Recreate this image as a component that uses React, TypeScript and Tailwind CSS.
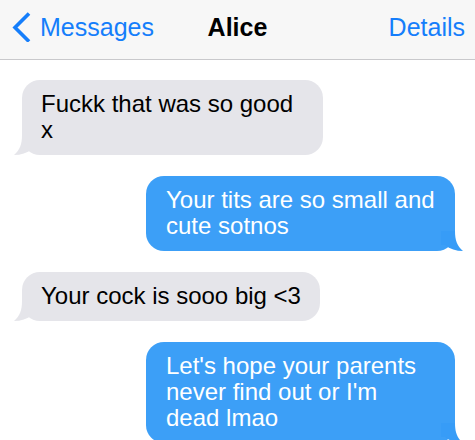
import React from 'react';

type Msg = { from: 'them' | 'me'; text: string };

const thread: Msg[] = [
  { from: 'them', text: 'Fuckk that was so good x' },
  { from: 'me', text: 'Your tits are so small and cute sotnos' },
  { from: 'them', text: 'Your cock is sooo big <3' },
  { from: 'me', text: "Let's hope your parents never find out or I'm dead lmao" },
];

const TailLeft = ({ color }: { color: string }) => (
  <svg className="absolute -left-[8px] bottom-0" width="22" height="20" viewBox="0 0 22 20">
    <path d="M8 0 C8 9 6 15 0 20 C7 20 13 18 18 14 L22 14 L22 0 Z" fill={color} />
  </svg>
);

const TailRight = ({ color }: { color: string }) => (
  <svg className="absolute -right-[8px] bottom-0" width="22" height="20" viewBox="0 0 22 20">
    <path d="M14 0 C14 9 16 15 22 20 C15 20 9 18 4 14 L0 14 L0 0 Z" fill={color} />
  </svg>
);

const Bubble = ({ msg }: { msg: Msg }) => {
  if (msg.from === 'them') {
    return (
      <div className="flex justify-start pl-[22px]">
        <div className="relative max-w-[301px] rounded-[18px] bg-[#e5e5ea] px-[19px] pt-[11px] pb-[12px] text-[24px] leading-[26px] text-black">
          <TailLeft color="#e5e5ea" />
          <span className="relative">{msg.text}</span>
        </div>
      </div>
    );
  }
  return (
    <div className="flex justify-end pr-[20px]">
      <div className="relative max-w-[309px] rounded-[18px] bg-[#3c9ff7] px-[20px] pt-[11px] pb-[12px] text-[24px] leading-[26px] text-white">
        <TailRight color="#379cf7" />
        <span className="relative">{msg.text}</span>
      </div>
    </div>
  );
};

export default function App() {
  return (
    <div className="h-[440px] w-[475px] overflow-hidden bg-white font-['Liberation_Sans',Arial,sans-serif]">
      {/* Nav bar */}
      <div className="relative flex h-[60px] items-start border-b border-[#c9c9cc] bg-[#f7f7f7] pt-[12px] text-[25px] leading-[30px]">
        <div className="flex items-center pl-[12px] text-[#157efb]">
          <svg width="20" height="30" viewBox="0 0 20 30" className="mr-[8px]">
            <path d="M17 1.5 L3 15.5 L17 29.5" fill="none" stroke="#157efb" strokeWidth="3.6" />
          </svg>
          <span>Messages</span>
        </div>
        <div className="absolute left-0 right-0 top-[12px] text-center font-bold text-black">Alice</div>
        <div className="ml-auto pr-[10px] text-[#157efb]">Details</div>
      </div>

      {/* Conversation */}
      <div className="flex flex-col gap-[21px] pt-[20px]">
        {thread.map((m, i) => (
          <Bubble key={i} msg={m} />
        ))}
      </div>
    </div>
  );
}
